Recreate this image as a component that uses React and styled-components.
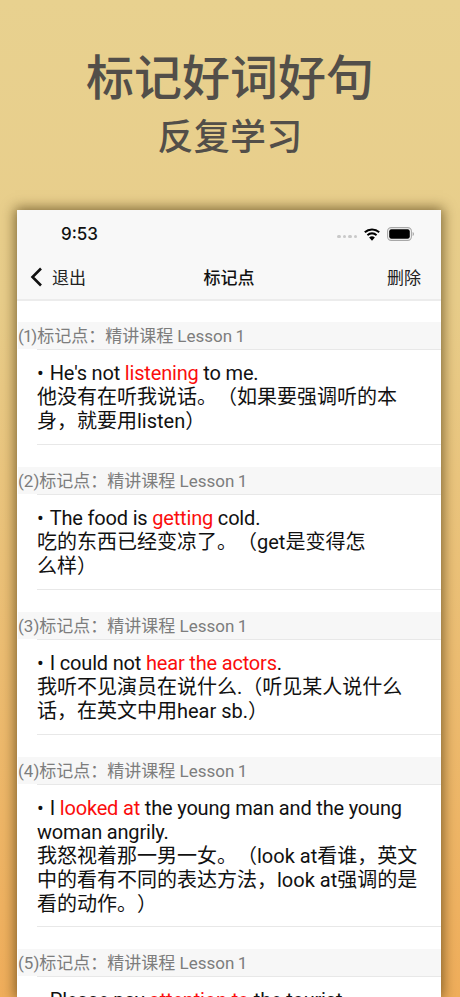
import React from "react";
import styled, { createGlobalStyle } from "styled-components";

const Global = createGlobalStyle`
  html, body { margin: 0; padding: 0; height: 997px; overflow: hidden; }
  body { font-family: Roboto, "Noto Sans CJK SC", sans-serif; text-spacing-trim: space-all; }
  #root { height: 997px; }
`;
const CJK = `"Noto Sans CJK SC", sans-serif`;
const SANS = `Roboto, "Noto Sans CJK SC", sans-serif`;

const Page = styled.div`
  width: 460px; height: 997px; overflow: hidden;
  background: linear-gradient(180deg, #e8d18f 0%, #e8cd8a 30%, #f0ae5b 100%);
  display: flex; flex-direction: column; align-items: center;
`;
const Hero = styled.header`
  height: 210px; flex: none; display: flex; flex-direction: column; align-items: center;
  color: #524e49; font-family: ${CJK};
`;
const Title = styled.h1`
  margin: 44px 0 0; font-size: 48px; line-height: 60px; font-weight: 500; letter-spacing: 0;
`;
const Subtitle = styled.h2`
  margin: 5px 0 0; font-size: 36px; line-height: 50px; font-weight: 500; letter-spacing: .3px;
`;
const Phone = styled.main`
  width: 424px; flex: 1; margin-left: -2px; background: #fff;
  box-shadow: 0 0 12px 2px rgba(70, 50, 10, .65);
  display: flex; flex-direction: column; min-height: 0; overflow: hidden;
`;
const Chrome = styled.div`
  background: #f8f8f8; border-bottom: 2px solid #ececec; height: 91px; flex: none; box-sizing: border-box;
  display: flex; flex-direction: column;
`;
const StatusBar = styled.div`
  height: 46px; display: flex; align-items: center; justify-content: space-between;
  padding: 2px 0 0 44px; box-sizing: border-box;
`;
const Time = styled.span`
  font: 500 17px/20px Inter, sans-serif; color: #111;
`;
const StatusIcons = styled.div`
  display: flex; align-items: center; gap: 7px; padding-right: 27px;
`;
const Dots = styled.div`
  display: flex; gap: 2px; margin-top: 5px;
`;
const Dot = styled.i`
  width: 3.5px; height: 3.5px; border-radius: 50%; background: #c9c9c9; display: block;
`;
const Nav = styled.nav`
  flex: 1; display: grid; grid-template-columns: 1fr auto 1fr; align-items: center; padding: 0 20px 1px;
  font: 400 17px/22px ${CJK}; color: #222;
`;
const Back = styled.div`
  display: flex; align-items: center; gap: 9px; margin-left: -7px;
`;
const NavTitle = styled.div`
  font-weight: 500; color: #111;
`;
const NavAction = styled.div`
  justify-self: end;
`;
const List = styled.div`
  padding-top: 21px; display: flex; flex-direction: column;
`;
const SectionHead = styled.div`
  height: 27px; background: #f7f7f7; color: #7d7d7d;
  font: 400 17px/28px ${SANS}; font-variant-numeric: proportional-nums;
  white-space: nowrap; margin-left: 1px;
`;
const Item = styled.section`
  margin-left: 20px; border-top: 1px solid #e8e8e8; border-bottom: 1px solid #e8e8e8;
  padding: 11px 20px 10px 0; margin-bottom: 22px; font: 400 20px/24px ${SANS}; color: #111;
  min-height: 96px; box-sizing: border-box;
`;
const Hl = styled.span`color: #fb0d0d;`;
const Bullet = styled.span`
  font-size: 20px; line-height: 0; margin-right: 6px;
`;
const English = styled.span`
  letter-spacing: -0.18px;
`;

const entries = [
  { n: 1, en: <>He's not <Hl>listening</Hl> to me.</>, zh: <>他没有在听我说话。（如果要强调听的本身，就要用listen）</> },
  { n: 2, en: <>The food is <Hl>getting</Hl> cold.</>, zh: <>吃的东西已经变凉了。（get是变得怎<br />么样）</> },
  { n: 3, en: <>I could not <Hl>hear the actors</Hl>.</>, zh: <>我听不见演员在说什么.（听见某人说什么话，在英文中用hear sb.）</> },
  { n: 4, en: <>I <Hl>looked at</Hl> the young man and the young woman angrily.</>, zh: <>我怒视着那一男一女。（look at看谁，英文中的看有不同的表达方法，look at强调的是看的动作。）</> },
  { n: 5, en: <>Please pay <Hl>attention to</Hl> the tourist.</>, zh: null },
];

export default function App() {
  return (
    <Page>
      <Global />
      <Hero>
        <Title>标记好词好句</Title>
        <Subtitle>反复学习</Subtitle>
      </Hero>
      <Phone>
        <Chrome>
          <StatusBar>
            <Time>9:53</Time>
            <StatusIcons>
              <Dots><Dot /><Dot /><Dot /><Dot /></Dots>
              <svg width="16" height="13" viewBox="1 0.2 15 12.2" aria-hidden="true">
                <path d="M8.5 2.6c2.4 0 4.5.9 6.1 2.400l1.300-1.400A10.800 10.800 0 0 0 8.500.7 10.800 10.800 0 0 0 1.100 3.600l1.300 1.400a8.900 8.900 0 0 1 6.100-2.400z" fill="#000" />
                <path d="M8.500 6.200c1.400 0 2.600.5 3.600 1.400l1.300-1.400a7.200 7.200 0 0 0-9.800 0l1.300 1.400c1-.9 2.200-1.400 3.600-1.400z" fill="#000" />
                <path d="M5.800 9.100 8.500 12.200l2.700-3.100a4 4 0 0 0-5.400 0z" fill="#000" />
              </svg>
              <svg width="27" height="14" viewBox="0 0 27 14" aria-hidden="true">
                <rect x=".6" y=".6" width="23.800" height="12.800" rx="3.600" fill="none" stroke="#a8a8a8" strokeWidth="1.100" />
                <rect x="2.200" y="2.200" width="20.600" height="9.600" rx="2.200" fill="#000" />
                <path d="M25.600 5v4c.8-.3 1.400-1.100 1.400-2s-.6-1.700-1.400-2z" fill="#a8a8a8" />
              </svg>
            </StatusIcons>
          </StatusBar>
          <Nav>
            <Back>
              <svg width="13" height="20" viewBox="0 0 13 20" aria-hidden="true">
                <path d="M11 1.500 2.500 10l8.500 8.500" fill="none" stroke="#111" strokeWidth="2.600" />
              </svg>
              退出
            </Back>
            <NavTitle>标记点</NavTitle>
            <NavAction>删除</NavAction>
          </Nav>
        </Chrome>
        <List>
          {entries.map(e => (
            <React.Fragment key={e.n}>
              <SectionHead>({e.n})标记点：精讲课程 Lesson 1</SectionHead>
              <Item>
                <Bullet>•</Bullet><English>{e.en}</English>
                {e.zh && <br />}
                {e.zh}
              </Item>
            </React.Fragment>
          ))}
        </List>
      </Phone>
    </Page>
  );
}
